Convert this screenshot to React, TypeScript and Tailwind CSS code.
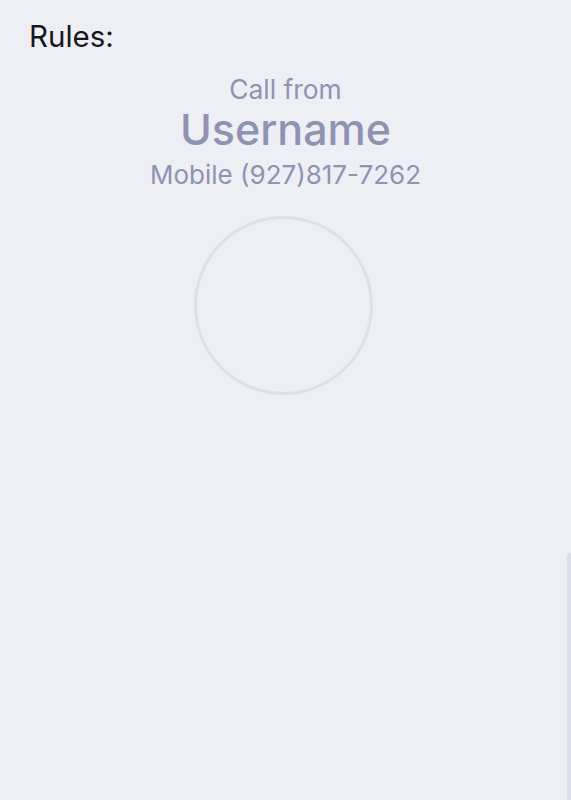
export default function App() {
  return (
    <div
      className="relative min-h-[800px] w-full overflow-hidden bg-[#eeeef5]"
      style={{ fontFamily: "Inter, 'Noto Sans', sans-serif" }}
    >
      <div className="px-[29px] pt-[19px] text-[29.5px] leading-[34px] text-[#16171c]">Rules:</div>

      <div className="mt-[21px] flex flex-col items-center text-[#8f93b2]">
        <div className="text-[26.4px] leading-[30px]">Call from</div>
        <div className="text-[43px] font-medium leading-[50px]">Username</div>
        <div className="text-[26px] leading-[42px]">Mobile (927)817-7262</div>
      </div>

      <div className="mt-[20px] flex justify-center pr-[4px]">
        <div className="h-[179px] w-[179px] rounded-full border-[3px] border-[#dfe0e7]" />
      </div>

      <div className="absolute bottom-0 right-0 top-[553px] w-[4px] rounded-tl bg-[#dddde9]" />
    </div>
  );
}
